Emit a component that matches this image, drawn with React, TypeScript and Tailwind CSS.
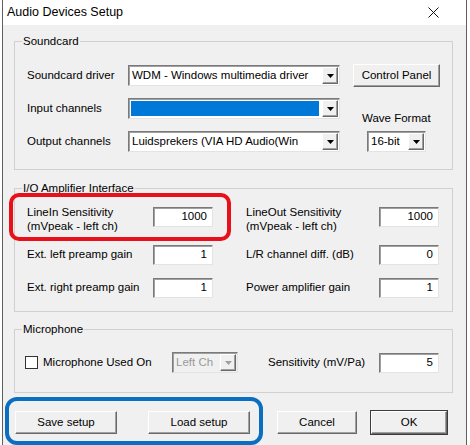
import React from "react";
import clsx from "clsx";

const sunken =
  "border border-t-[#7a7a7a] border-l-[#7a7a7a] border-b-[#e3e3e3] border-r-[#e3e3e3] shadow-[inset_1px_1px_0_#a0a0a0]";
const raised =
  "border border-t-white border-l-white border-b-[#696969] border-r-[#696969] shadow-[inset_-1px_-1px_0_#a0a0a0]";

const Arrow = ({ disabled }: { disabled?: boolean }) => (
  <div className={clsx("flex h-full w-[16px] items-center justify-center bg-[#f0f0f0]", raised)}>
    <svg width="7" height="4" viewBox="0 0 7 4">
      <path d="M0 0 L7 0 L3.5 4 Z" fill={disabled ? "#a0a0a0" : "#000"} />
    </svg>
  </div>
);

const Combo = ({
  className,
  value,
  selected,
  disabled,
}: {
  className: string;
  value?: string;
  selected?: boolean;
  disabled?: boolean;
}) => (
  <div
    className={clsx(
      "flex h-[21px] items-stretch p-[1px] pl-[2px]",
      sunken,
      disabled ? "bg-[#f0f0f0] text-[#9a9a9a]" : "bg-white",
      className
    )}
  >
    {selected ? (
      <div className="my-[1px] mr-[3px] flex-1 bg-[#0078d7]" />
    ) : (
      <div className="flex flex-1 items-center overflow-hidden whitespace-nowrap pl-[1px]">{value}</div>
    )}
    <Arrow disabled={disabled} />
  </div>
);

const Field = ({ value }: { value: string }) => (
  <div className={clsx("flex h-[20px] w-[60px] items-center justify-end bg-white pr-[5px]", sunken)}>
    {value}
  </div>
);

const Btn = ({ className, label }: { className: string; label: string }) => (
  <button className={clsx("flex h-[23px] items-center justify-center bg-[#f0f0f0]", raised, className)}>
    {label}
  </button>
);

const Group = ({ title, className, children }: { title: string; className: string; children: React.ReactNode }) => (
  <fieldset className={clsx("w-[439px] border border-[#d0d0d0] p-0", className)}>
    <legend className="ml-[7px] px-[1px] leading-[14px]">{title}</legend>
    {children}
  </fieldset>
);

export default function App() {
  return (
    <div className="relative h-[445px] w-[470px] overflow-hidden bg-white font-['Liberation_Sans',Arial,sans-serif] text-[11.5px] text-black">
      <div className="ml-[2px] flex h-[445px] w-[465px] flex-col border-x border-[#5f5f5f]">
        <div className="flex h-[25px] items-center justify-between bg-white pl-[4px] pr-[27px] text-[12.5px]">
          <span>Audio Devices Setup</span>
          <svg width="11" height="11" viewBox="0 0 11 11">
            <path d="M0.5 0.5 L10.5 10.5 M10.5 0.5 L0.5 10.5" stroke="#111" strokeWidth="1" />
          </svg>
        </div>

        <div className="flex flex-1 flex-col bg-[#f0f0f0] pl-[11px]">
          <Group title="Soundcard" className="mt-[9px]">
            <div className="flex flex-col gap-[12px] pb-[17px] pl-[12px] pt-[17px]">
              <div className="flex h-[21px] items-center">
                <span className="w-[101px]">Soundcard driver</span>
                <Combo className="w-[212px]" value="WDM - Windows multimedia driver" />
                <Btn className="ml-[13px] h-[22px] w-[87px]" label="Control Panel" />
              </div>
              <div className="flex h-[21px] items-center">
                <span className="w-[101px]">Input channels</span>
                <Combo className="w-[212px]" selected />
                <span className="ml-[22px] mt-[13px] self-start whitespace-nowrap leading-[14px]">Wave Format</span>
              </div>
              <div className="flex h-[21px] items-center">
                <span className="w-[101px]">Output channels</span>
                <Combo className="w-[212px]" value="Luidsprekers (VIA HD Audio(Win" />
                <Combo className="ml-[27px] w-[59px]" value="16-bit" />
              </div>
            </div>
          </Group>

          <Group title="I/O Amplifier Interface" className="mt-[11px]">
            <div className="flex flex-col pb-[13px] pl-[12px] pt-[10px]">
              <div className="flex h-[28px] items-start">
                <span className="w-[126px] leading-[14px]">
                  LineIn Sensitivity
                  <br />
                  (mVpeak - left ch)
                </span>
                <div className="mt-[2px]">
                  <Field value="1000" />
                </div>
                <span className="ml-[33px] w-[133px] leading-[14px]">
                  LineOut Sensitivity
                  <br />
                  (mVpeak - left ch)
                </span>
                <div className="mt-[2px]">
                  <Field value="1000" />
                </div>
              </div>
              <div className="mt-[12px] flex h-[20px] items-center">
                <span className="w-[126px]">Ext. left preamp gain</span>
                <Field value="1" />
                <span className="ml-[33px] w-[133px]">L/R channel diff. (dB)</span>
                <Field value="0" />
              </div>
              <div className="mt-[13px] flex h-[20px] items-center">
                <span className="w-[126px]">Ext. right preamp gain</span>
                <Field value="1" />
                <span className="ml-[33px] w-[133px]">Power amplifier gain</span>
                <Field value="1" />
              </div>
            </div>
          </Group>

          <Group title="Microphone" className="mt-[10px]">
            <div className="box-content flex h-[21px] items-center pb-[19px] pl-[10px] pt-[16px]">
              <div className="h-[13px] w-[13px] border border-[#333] bg-white" />
              <span className="ml-[5px] w-[129px]">Microphone Used On</span>
              <Combo className="w-[66px]" value="Left Ch" disabled />
              <span className="ml-[30px] w-[111px]">Sensitivity (mV/Pa)</span>
              <Field value="5" />
            </div>
          </Group>

          <div className="mt-[17px] flex items-center pl-[1px]">
            <Btn className="w-[102px]" label="Save setup" />
            <Btn className="ml-[31px] w-[102px]" label="Load setup" />
            <Btn className="ml-[27px] w-[80px]" label="Cancel" />
            <div className="ml-[13px] border border-[#3c3c3c]">
              <Btn className="h-[21px] w-[76px]" label="OK" />
            </div>
          </div>
        </div>
      </div>

      <div className="absolute left-[9px] top-[193px] h-[48px] w-[222px] rounded-[10px] border-4 border-[#e8101a]" />
      <div className="absolute left-[5px] top-[397px] h-[48px] w-[258px] rounded-[12px] border-4 border-[#0a6fc0]" />
    </div>
  );
}
